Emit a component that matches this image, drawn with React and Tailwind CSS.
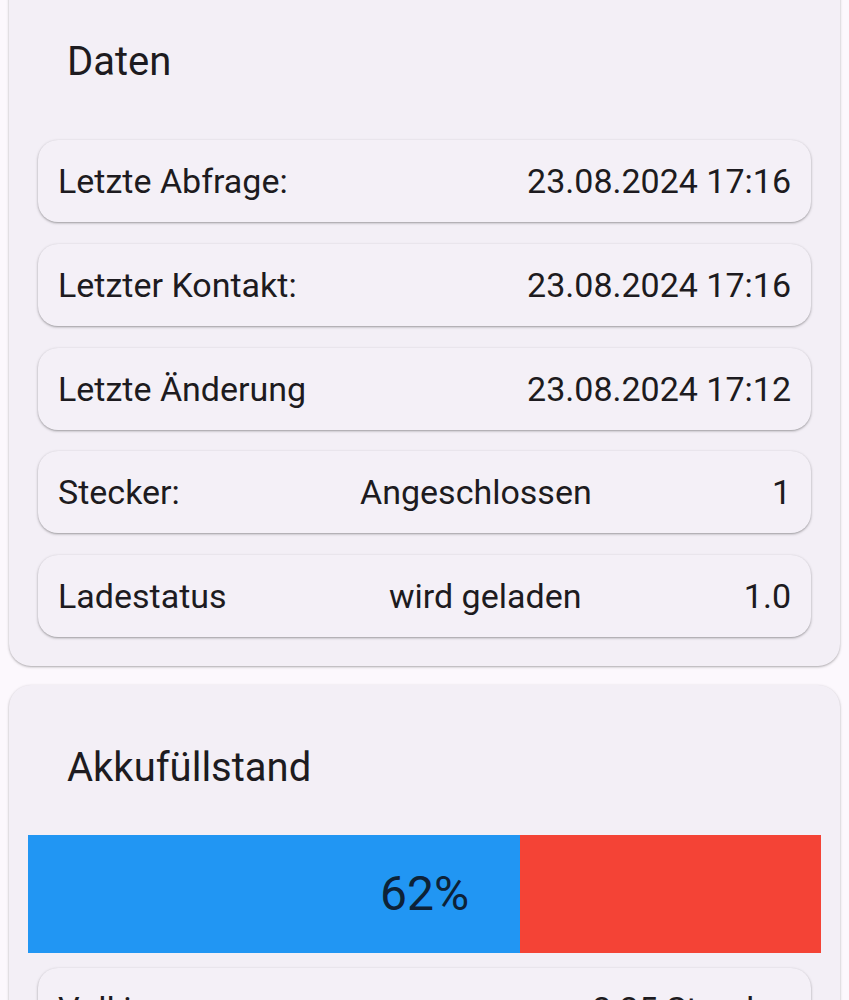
import React from "react";

const rowShadow = "shadow-[0_1px_2px_rgba(0,0,0,0.28),0_1px_3px_1px_rgba(0,0,0,0.08)]";

function Row({ children }) {
  return (
    <div className={`h-[82px] mx-[29px] px-[20px] rounded-[20px] bg-[#f4f0f7] flex items-center justify-between ${rowShadow}`}>
      {children}
    </div>
  );
}

export default function App() {
  return (
    <div
      className="min-h-[1000px] bg-[#fcf8fd] px-[9px] pb-10 overflow-hidden text-[#1d1b20]"
      style={{ fontFamily: "Roboto, 'Noto Sans', sans-serif" }}
    >
      <div className="-mt-[24px] pt-[24px] pb-[29px] rounded-[22px] bg-[#f3eff6] shadow-[0_1px_2px_rgba(0,0,0,0.25),0_1px_3px_1px_rgba(0,0,0,0.06)]">
        <div className="h-[124px] mb-[16px] flex items-center pl-[58px] text-[40px] leading-none">Daten</div>
        <div className="flex flex-col gap-[21.75px] text-[34px] leading-none">
          <Row>
            <span>Letzte Abfrage:</span>
            <span>23.08.2024 17:16</span>
          </Row>
          <Row>
            <span>Letzter Kontakt:</span>
            <span>23.08.2024 17:16</span>
          </Row>
          <Row>
            <span>Letzte Änderung</span>
            <span>23.08.2024 17:12</span>
          </Row>
          <Row>
            <span>Stecker:</span>
            <span>Angeschlossen</span>
            <span>1</span>
          </Row>
          <Row>
            <span>Ladestatus</span>
            <span>wird geladen</span>
            <span>1.0</span>
          </Row>
        </div>
      </div>

      <div className="mt-[19px] pt-[40px] pb-[29px] rounded-[22px] bg-[#f3eff6] shadow-[0_1px_2px_rgba(0,0,0,0.25),0_1px_3px_1px_rgba(0,0,0,0.06)]">
        <div className="h-[86px] mb-[24px] flex items-center pl-[58px] text-[40px] leading-none">Akkufüllstand</div>
        <div className="relative mx-[19px] h-[118px] flex bg-[#f44336]">
          <div className="h-full bg-[#2196f3]" style={{ width: "62%" }} />
          <div className="absolute inset-0 flex items-center justify-center text-[48px] leading-none text-[#0d2237]">62%</div>
        </div>
        <div className="mt-[15px] flex flex-col gap-[21.75px] text-[34px] leading-none">
          <Row>
            <span>Voll in</span>
            <span>2:25 Stunden</span>
          </Row>
        </div>
      </div>
    </div>
  );
}
